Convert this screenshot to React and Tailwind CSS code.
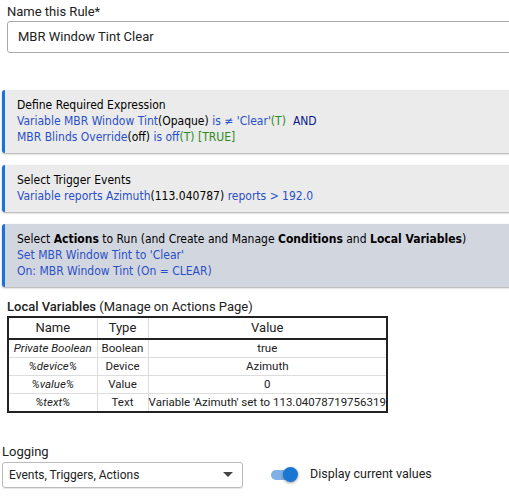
const roboto = { fontFamily: 'Roboto, "Noto Sans", sans-serif' }

function Panel({ dark, children }) {
  return (
    <div
      className={`mr-[-20px] border-l-[3px] border-[#1a73d9] rounded-l-[3px] pl-[12px] pt-[7px] pb-[8px] text-[12px] leading-[16px] shadow-[0_1px_2px_rgba(0,0,0,0.35)] ${
        dark ? 'bg-[#d2d6df]' : 'bg-[#ebebeb]'
      }`}
      style={{ fontFamily: '"DejaVu Sans Condensed", "DejaVu Sans", sans-serif' }}
    >
      {children}
    </div>
  )
}

const rows = [
  ['Private Boolean', 'Boolean', 'true'],
  ['%device%', 'Device', 'Azimuth'],
  ['%value%', 'Value', '0'],
  ['%text%', 'Text', "Variable 'Azimuth' set to 113.04078719756319"],
]

export default function App() {
  return (
    <div className="w-[509px] h-[500px] overflow-hidden bg-white text-[#222]" style={roboto}>
      <div className="pl-[7px] pt-[4px]">
        <div className="text-[13px] leading-[16px] text-[#222]">Name this Rule*</div>
        <div className="mt-[1px] mr-[-20px] h-[32px] border border-[#aaa] rounded-[3px] flex items-center pl-[10px] text-[13px]">
          MBR Window Tint Clear
        </div>
      </div>

      <div className="pl-[2px] mt-[37px] flex flex-col gap-[12px]">
        <Panel>
          <div className="text-black">Define Required Expression</div>
          <div className="text-[#2a50c8]">
            Variable MBR Window Tint<span className="text-black">(Opaque)</span> is ≠ 'Clear'
            <span className="text-[#2e8a1e]">(T)</span>
            <span className="ml-[7px] text-[#0a1a8c]">AND</span>
          </div>
          <div className="text-[#2a50c8]">
            MBR Blinds Override<span className="text-black">(off)</span> is off
            <span className="text-[#2e8a1e]">(T) [TRUE]</span>
          </div>
        </Panel>
        <Panel>
          <div className="text-black">Select Trigger Events</div>
          <div className="text-[#2a50c8]">
            Variable reports Azimuth<span className="text-black">(113.040787)</span> reports &gt; 192.0
          </div>
        </Panel>
        <Panel dark>
          <div className="text-black">
            Select <b>Actions</b> to Run (and Create and Manage <b>Conditions</b> and <b>Local Variables</b>)
          </div>
          <div className="text-[#2a50c8]">Set MBR Window Tint to 'Clear'</div>
          <div className="text-[#2a50c8]">On: MBR Window Tint (On = CLEAR)</div>
        </Panel>
      </div>

      <div className="pl-[7px] mt-[12px]">
        <div className="text-[13px] leading-[16px] text-[#222]">
          <span className="font-medium">Local Variables</span> (Manage on Actions Page)
        </div>
        <table className="mt-[1px] w-[381px] table-fixed border-collapse border-2 border-[#222] text-[11.5px] text-[#222] whitespace-nowrap">
          <colgroup>
            <col className="w-[89px]" />
            <col className="w-[51px]" />
            <col />
          </colgroup>
          <thead>
            <tr className="border-b-2 border-[#222] h-[20px]">
              <th className="p-0 font-normal text-[13px] border-r border-[#ddd]">Name</th>
              <th className="p-0 font-normal text-[13px] border-r border-[#ddd]">Type</th>
              <th className="p-0 font-normal text-[13px]">Value</th>
            </tr>
          </thead>
          <tbody>
            {rows.map((r, i) => (
              <tr key={i} className="h-[18px] border-t border-[#ddd] first:border-t-0">
                <td className="p-0 italic text-center border-r border-[#ddd] leading-[17px]">{r[0]}</td>
                <td className="p-0 text-center border-r border-[#ddd] leading-[17px]">{r[1]}</td>
                <td className="p-0 text-center leading-[17px]">{r[2]}</td>
              </tr>
            ))}
          </tbody>
        </table>
      </div>

      <div className="pl-[2px] mt-[31px]">
        <div className="text-[13px] leading-[16px] text-[#222]">Logging</div>
        <div className="flex items-center mt-[2px]">
          <div className="w-[241px] h-[26px] border border-[#bbb] rounded-[3px] flex items-center justify-between pl-[6px] pr-[9px] text-[12px] shadow-[0_1px_1px_rgba(0,0,0,0.1)]">
            <span>Events, Triggers, Actions</span>
            <svg width="10" height="5" viewBox="0 0 10 5">
              <path d="M0 0 L10 0 L5 5 Z" fill="#444" />
            </svg>
          </div>
          <div className="ml-[28px] relative w-[27px] h-[16px] flex items-center">
            <div className="w-[22px] h-[10px] rounded-full bg-[#7fb0e6]" />
            <div className="absolute right-0 top-[0.5px] w-[15px] h-[15px] rounded-full bg-[#1976d2] shadow-[0_1px_3px_rgba(0,0,0,0.4)]" />
          </div>
          <span className="ml-[12px] text-[12.5px] text-[#222]">Display current values</span>
        </div>
      </div>
    </div>
  )
}
